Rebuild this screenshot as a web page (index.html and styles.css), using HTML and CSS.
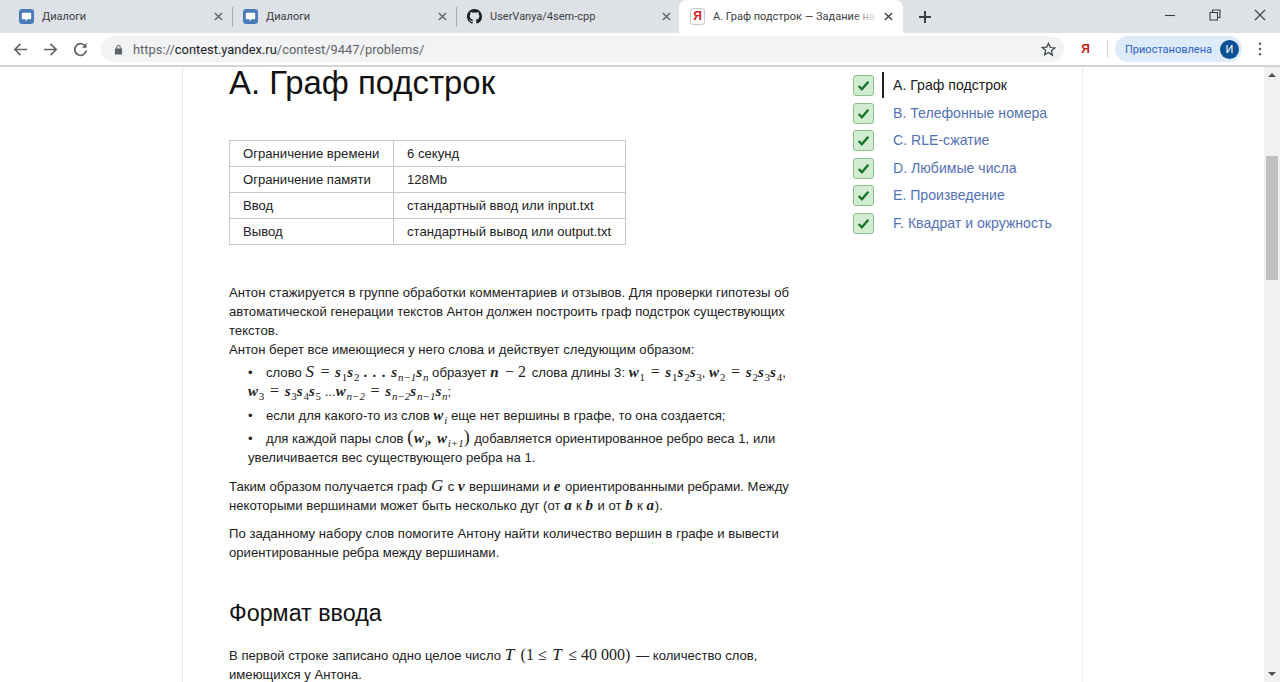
FILE: index.html
```html
<!DOCTYPE html>
<html lang="ru">
<head>
<meta charset="utf-8">
<title>А. Граф подстрок</title>
<link rel="stylesheet" href="styles.css">
</head>
<body>
<header class="chrome">
  <div class="tabstrip">
    <div class="tab">
      <svg class="fav" viewBox="0 0 16 16"><rect width="16" height="16" rx="3.5" fill="#4a7ab8"/><path d="M4 4h8a1 1 0 0 1 1 1v5a1 1 0 0 1-1 1H9l-2 2v-2H4a1 1 0 0 1-1-1V5a1 1 0 0 1 1-1z" fill="#fff"/></svg>
      <span class="tab-title">Диалоги</span>
      <svg class="tab-x" viewBox="0 0 10 10"><path d="M1 1l8 8M9 1l-8 8"/></svg>
    </div>
    <div class="tab tab-sep">
      <svg class="fav" viewBox="0 0 16 16"><rect width="16" height="16" rx="3.5" fill="#4a7ab8"/><path d="M4 4h8a1 1 0 0 1 1 1v5a1 1 0 0 1-1 1H9l-2 2v-2H4a1 1 0 0 1-1-1V5a1 1 0 0 1 1-1z" fill="#fff"/></svg>
      <span class="tab-title">Диалоги</span>
      <svg class="tab-x" viewBox="0 0 10 10"><path d="M1 1l8 8M9 1l-8 8"/></svg>
    </div>
    <div class="tab tab-sep">
      <svg class="fav" viewBox="0 0 16 16"><path fill="#1b1f23" d="M8 0C3.58 0 0 3.58 0 8c0 3.54 2.29 6.53 5.47 7.59.4.07.55-.17.55-.38 0-.19-.01-.82-.01-1.49-2.01.37-2.53-.49-2.69-.94-.09-.23-.48-.94-.82-1.13-.28-.15-.68-.52-.01-.53.63-.01 1.08.58 1.23.82.72 1.21 1.87.87 2.33.66.07-.52.28-.87.51-1.07-1.78-.2-3.64-.89-3.64-3.95 0-.87.31-1.59.82-2.15-.08-.2-.36-1.02.08-2.12 0 0 .67-.21 2.2.82.64-.18 1.32-.27 2-.27.68 0 1.36.09 2 .27 1.53-1.04 2.2-.82 2.2-.82.44 1.1.16 1.92.08 2.12.51.56.82 1.27.82 2.15 0 3.07-1.87 3.75-3.65 3.95.29.25.54.73.54 1.48 0 1.07-.01 1.93-.01 2.2 0 .21.15.46.55.38A8.013 8.013 0 0016 8c0-4.42-3.58-8-8-8z"/></svg>
      <span class="tab-title">UserVanya/4sem-cpp</span>
      <svg class="tab-x" viewBox="0 0 10 10"><path d="M1 1l8 8M9 1l-8 8"/></svg>
    </div>
    <div class="tab tab-active">
      <span class="ya-fav">Я</span>
      <span class="tab-title tab-title-fade">А. Граф подстрок — Задание на контест</span>
      <svg class="tab-x tab-x-dark" viewBox="0 0 10 10"><path d="M1 1l8 8M9 1l-8 8"/></svg>
    </div>
    <svg class="newtab" viewBox="0 0 12 12"><path d="M6 0v12M0 6h12"/></svg>
    <div class="winctl">
      <svg class="win-ic" viewBox="0 0 12 12"><path d="M1 6.5h10"/></svg>
      <svg class="win-ic" viewBox="0 0 12 12"><path d="M3.5 3V1h7.500v7.500H9M1 3.500h7.500V11H1z"/></svg>
      <svg class="win-ic" viewBox="0 0 12 12"><path d="M1 1l10 10M11 1L1 11"/></svg>
    </div>
  </div>
  <div class="toolbar">
    <svg class="nav" viewBox="0 0 16 16"><path d="M15 8H2M8 2L2 8l6 6"/></svg>
    <svg class="nav" viewBox="0 0 16 16"><path d="M1 8h13M8 2l6 6-6 6"/></svg>
    <svg class="nav" viewBox="0 0 16 16"><path d="M13.500 5A6.200 6.200 0 1 0 14.200 9"/><path class="nav-fill" d="M14.500 1v5h-5z"/></svg>
    <div class="omnibox">
      <svg class="lock" viewBox="0 0 10 12"><path d="M2.500 5V3.500a2.500 2.500 0 0 1 5 0V5H9v6.500H1V5zM3.700 5h2.600V3.500a1.300 1.300 0 0 0-2.600 0z"/></svg>
      <span class="url"><span class="url-dim">https://</span>contest.yandex.ru<span class="url-dim">/contest/9447/problems/</span></span>
      <svg class="star" viewBox="0 0 16 16"><path d="M8 1.500l1.900 4.400 4.800.4-3.600 3.100 1.100 4.700L8 11.100l-4.200 2.500 1.100-4.700-3.600-3.100 4.800-.4z"/></svg>
    </div>
    <span class="ya-btn">Я</span>
    <span class="tool-sep"></span>
    <div class="profile">
      <span class="profile-text">Приостановлена</span>
      <span class="avatar">И</span>
    </div>
    <svg class="menu" viewBox="0 0 4 16"><circle cx="2" cy="2" r="1.500"/><circle cx="2" cy="8" r="1.500"/><circle cx="2" cy="14" r="1.500"/></svg>
  </div>
</header>
<div class="viewport">
  <main class="page">
    <article class="problem">
      <h1 class="title">А. Граф подстрок</h1>
      <table class="limits">
        <tr><td class="lim-k">Ограничение времени</td><td>6 секунд</td></tr>
        <tr><td class="lim-k">Ограничение памяти</td><td>128Mb</td></tr>
        <tr><td class="lim-k">Ввод</td><td>стандартный ввод или input.txt</td></tr>
        <tr><td class="lim-k">Вывод</td><td>стандартный вывод или output.txt</td></tr>
      </table>
      <p class="para para-first">Антон стажируется в группе обработки комментариев и отзывов. Для проверки гипотезы об автоматической генерации текстов Антон должен построить граф подстрок существующих текстов.<br>Антон берет все имеющиеся у него слова и действует следующим образом:</p>
      <ul class="items">
        <li>слово <span class="m m-lg">S</span> <span class="m-op">=</span> <span class="m">s<sub class="d">1</sub>s<sub class="d">2</sub> . . . s<sub>n−1</sub>s<sub>n</sub></span> образует <span class="m">n</span> <span class="m-op">− 2</span> слова длины 3: <span class="m">w<sub class="d">1</sub></span> <span class="m-op">=</span> <span class="m">s<sub class="d">1</sub>s<sub class="d">2</sub>s<sub class="d">3</sub></span>, <span class="m">w<sub class="d">2</sub></span> <span class="m-op">=</span> <span class="m">s<sub class="d">2</sub>s<sub class="d">3</sub>s<sub class="d">4</sub></span>, <span class="m">w<sub class="d">3</sub></span> <span class="m-op">=</span> <span class="m">s<sub class="d">3</sub>s<sub class="d">4</sub>s<sub class="d">5</sub></span> ...<span class="m">w<sub>n−2</sub></span> <span class="m-op">=</span> <span class="m">s<sub>n−2</sub>s<sub>n−1</sub>s<sub>n</sub></span>;</li>
        <li>если для какого-то из слов <span class="m">w<sub>i</sub></span> еще нет вершины в графе, то она создается;</li>
        <li>для каждой пары слов <span class="m"><span class="m-paren">(</span>w<sub>i</sub>, w<sub>i+1</sub><span class="m-paren">)</span></span> добавляется ориентированное ребро веса 1, или увеличивается вес существующего ребра на 1.</li>
      </ul>
      <p class="para">Таким образом получается граф <span class="m m-lg">G</span> с <span class="m">v</span> вершинами и <span class="m">e</span> ориентированными ребрами. Между некоторыми вершинами может быть несколько дуг (от <span class="m">a</span> к <span class="m">b</span> и от <span class="m">b</span> к <span class="m">a</span>).</p>
      <p class="para">По заданному набору слов помогите Антону найти количество вершин в графе и вывести ориентированные ребра между вершинами.</p>
      <h2 class="subtitle">Формат ввода</h2>
      <p class="para">В первой строке записано одно целое число <span class="m m-lg">T</span> <span class="m-op">(1 ≤</span> <span class="m m-lg">T</span> <span class="m-op">≤ 40 000)</span> — количество слов, имеющихся у Антона.</p>
    </article>
    <nav class="side">
      <a class="side-item side-item-cur"><span class="chk"><svg viewBox="0 0 14 14"><path d="M2.500 7.500l3 3 6-7"/></svg></span><span class="side-name">A. Граф подстрок</span></a>
      <a class="side-item"><span class="chk"><svg viewBox="0 0 14 14"><path d="M2.500 7.500l3 3 6-7"/></svg></span><span class="side-name">B. Телефонные номера</span></a>
      <a class="side-item"><span class="chk"><svg viewBox="0 0 14 14"><path d="M2.500 7.500l3 3 6-7"/></svg></span><span class="side-name">C. RLE-сжатие</span></a>
      <a class="side-item"><span class="chk"><svg viewBox="0 0 14 14"><path d="M2.500 7.500l3 3 6-7"/></svg></span><span class="side-name">D. Любимые числа</span></a>
      <a class="side-item"><span class="chk"><svg viewBox="0 0 14 14"><path d="M2.500 7.500l3 3 6-7"/></svg></span><span class="side-name">E. Произведение</span></a>
      <a class="side-item"><span class="chk"><svg viewBox="0 0 14 14"><path d="M2.500 7.500l3 3 6-7"/></svg></span><span class="side-name">F. Квадрат и окружность</span></a>
    </nav>
  </main>
  <div class="scrollbar">
    <span class="sb-arrow sb-up"></span>
    <span class="sb-thumb"></span>
    <span class="sb-arrow sb-down"></span>
  </div>
</div>
</body>
</html>
```
FILE: styles.css
```css
* { box-sizing: border-box; }
html, body { margin: 0; height: 682px; overflow: hidden; background: #fff; }
body { font-family: "Liberation Sans", Arial, sans-serif; color: #222; display: flex; flex-direction: column; }

.chrome { flex: none; height: 67px; border-bottom: 2px solid #d4d4d4; }
.tabstrip { height: 33px; background: #dee1e6; display: flex; align-items: center; padding: 0 0 0 8px; }
.tab { width: 224px; height: 33px; flex: none; display: flex; align-items: center; padding: 0 9px 0 11px; position: relative; font-family: Roboto, "Noto Sans", sans-serif; font-size: 11px; color: #3c4043; }
.tab-sep::before { content: ""; position: absolute; left: 0; top: 7px; height: 20px; width: 1px; background: #a9acb1; }
.fav { width: 15px; height: 15px; flex: none; margin-right: 8px; }
.tab-title { flex: 1; white-space: nowrap; overflow: hidden; }
.tab-x { width: 9px; height: 9px; flex: none; fill: none; stroke: #5f6368; stroke-width: 1.500; }
.tab-x-dark { stroke: #3c4043; }
.tab-active { background: #fff; border-radius: 8px 8px 0 0; margin-left: -1px; padding: 0 10px 0 11px; }
.tab-title-fade { position: relative; color: #3c4043; margin-right: 5px; }
.tab-title-fade::after { content: ""; position: absolute; right: 0; top: 0; bottom: 0; width: 28px; background: linear-gradient(to right, rgba(255,255,255,0), #fff); }
.ya-fav { width: 15px; height: 17px; flex: none; margin-right: 8px; border: 1px solid #c9c9c9; border-radius: 3px; color: #c8211d; font: bold 12px/15px "Liberation Sans", sans-serif; text-align: center; }
.newtab { width: 12px; height: 12px; flex: none; margin-left: 16px; fill: none; stroke: #3c4043; stroke-width: 2; }
.winctl { margin-left: auto; display: flex; align-items: center; gap: 33px; padding: 0 14px 4px 0; }
.win-ic { width: 12px; height: 12px; fill: none; stroke: #3c4043; stroke-width: 1.100; }

.toolbar { height: 32px; display: flex; align-items: center; padding: 0 0 0 13px; background: #fff; }
.nav { width: 15px; height: 15px; flex: none; margin-right: 15px; fill: none; stroke: #5f6368; stroke-width: 1.800; }
.nav-fill { fill: #5f6368; stroke: none; }
.omnibox { width: 963px; height: 26px; margin-left: -2px; background: #f1f3f4; border-radius: 13px; display: flex; align-items: center; padding: 0 8px 0 13px; }
.lock { width: 9px; height: 11px; flex: none; fill: #5f6368; fill-rule: evenodd; margin-right: 10px; }
.url { flex: 1; font-family: Roboto, sans-serif; font-size: 12.900px; color: #202124; white-space: nowrap; }
.url-dim { color: #5f6368; }
.star { width: 15px; height: 15px; flex: none; fill: none; stroke: #3c4043; stroke-width: 1.300; }
.ya-btn { flex: none; width: 43px; text-align: center; color: #c8211d; font-weight: bold; font-size: 12px; }
.tool-sep { width: 1px; height: 18px; background: #d3d5d8; flex: none; }
.profile { width: 127px; height: 26px; margin-left: 7px; flex: none; border-radius: 13px; background: #deebfb; display: flex; align-items: center; justify-content: space-between; padding: 0 3px 0 10px; }
.profile-text { font-family: Roboto, sans-serif; font-size: 11px; color: #2b62c1; white-space: nowrap; }
.avatar { width: 19px; height: 19px; border-radius: 50%; background: #0b4f94; color: #fff; font-family: Roboto, sans-serif; font-size: 11px; line-height: 19px; text-align: center; }
.menu { width: 4px; height: 14px; flex: none; margin-left: 16px; fill: #5f6368; }

.viewport { flex: 1; min-height: 0; display: flex; overflow: hidden; }
.page { flex: none; width: 901px; margin-left: 182px; border-left: 1px solid #ebebeb; border-right: 1px solid #ebebeb; display: flex; padding-left: 46px; overflow: hidden; }
.problem { flex: none; width: 570px; color: #222; font-size: 13.130px; line-height: 19px; }
.title { margin: 0; font-weight: 400; font-size: 32.900px; line-height: 31px; color: #111; }
.limits { margin: 42px 0 0; width: 397px; border-collapse: collapse; }
.limits td { height: 26px; padding: 0 0 0 13px; border: 1px solid #c8c8c8; line-height: 19px; }
.lim-k { width: 164px; }
.para { margin: 0 0 9px; }
.para-first { margin: 38px 0 4px; }
.items { list-style: none; margin: 0 0 9.500px; padding: 0 0 0 19px; }
.items li { margin-bottom: 4.500px; }
.items li::before { content: "•"; display: inline-block; width: 18px; }
.m { font-family: "Liberation Serif", serif; font-style: italic; font-weight: 700; font-size: 15px; line-height: 0; letter-spacing: 0.800px; color: #222; white-space: nowrap; }
.m-lg { font-size: 17px; font-weight: 400; }
.m-op { font-family: "Liberation Serif", serif; font-size: 16px; line-height: 0; margin: 0 2px; }
.m sub { font-size: 11px; line-height: 0; font-weight: 400; letter-spacing: 0; }
.m sub.d { font-style: normal; }
.m-paren { font-style: normal; font-weight: 400; font-size: 18px; }
.subtitle { margin: 37px 0 19px; font-weight: 400; font-size: 23.300px; line-height: 28px; color: #111; }

.side { flex: none; margin-left: 54px; padding-top: 4.500px; width: 220px; font-size: 14.100px; }
.side-item { display: flex; align-items: center; height: 27.500px; color: #5272b4; }
.side-item-cur { color: #222; }
.chk { width: 21px; height: 21px; flex: none; border: 1px solid #8cbf8c; border-radius: 3px; background: #d2ecd2; display: flex; align-items: center; justify-content: center; margin: 1px 19px 0 0; }
.chk svg { width: 15px; height: 15px; fill: none; stroke: #16742b; stroke-width: 2.200; }
.side-item-cur .side-name { position: relative; }
.side-item-cur .side-name::before { content: ""; position: absolute; left: -11px; top: -5px; bottom: -5px; width: 2px; background: #222; }

.scrollbar { flex: none; width: 16px; margin-left: auto; background: #f1f1f1; display: flex; flex-direction: column; align-items: center; position: relative; }
.sb-arrow { position: absolute; left: 4px; width: 0; height: 0; border-left: 4px solid transparent; border-right: 4px solid transparent; }
.sb-up { top: 6px; border-bottom: 4px solid #505050; }
.sb-down { bottom: 6px; border-top: 4px solid #505050; }
.sb-thumb { width: 12px; height: 124px; margin-top: 89px; background: #c1c1c1; }
```
